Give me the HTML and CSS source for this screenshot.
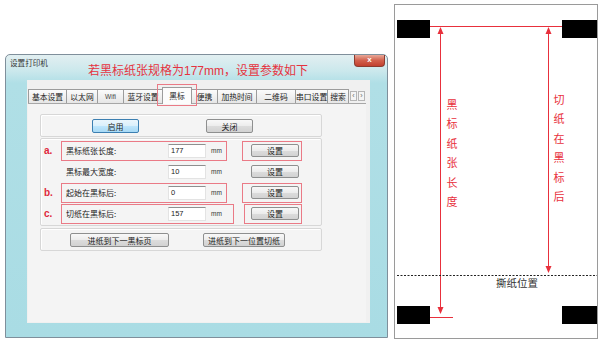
FILE: index.html
```html
<!DOCTYPE html>
<html lang="zh-CN">
<head>
  <meta charset="UTF-8" />
  <title>黑标设置</title>
  <link rel="stylesheet" href="styles.css">
</head>
<body>
  <div class="page">
    <div class="window">
      <div class="titlebar">
        <span class="title">设置打印机</span>
        <span class="note">若黑标纸张规格为177mm，设置参数如下</span>
        <span class="close">x</span>
      </div>
      <div class="client">
        <div class="tabs">
          <span class="tab">基本设置</span>
          <span class="tab">以太网</span>
          <span class="tab latin">Wifi</span>
          <span class="tab">蓝牙设置</span>
          <span class="tab active">黑标<i class="ring"></i></span>
          <span class="tab">便携</span>
          <span class="tab">加热时间</span>
          <span class="tab">二维码</span>
          <span class="tab">串口设置</span>
          <span class="tab">搜索</span>
          <span class="scroll"><b>‹</b><b>›</b></span>
        </div>
        <div class="panel">
          <div class="group g-switch">
            <button class="btn btn-focus">启用</button>
            <button class="btn btn-off">关闭</button>
          </div>
          <div class="group g-rows">
            <div class="row">
              <span class="tag">a.</span>
              <div class="field hl">
                <span class="label">黑标纸张长度:</span>
                <span class="input">177</span>
                <span class="unit">mm</span>
              </div>
              <div class="act hl"><button class="btn btn-set">设置</button></div>
            </div>
            <div class="row">
              <span class="tag"></span>
              <div class="field">
                <span class="label">黑标最大宽度:</span>
                <span class="input">10</span>
                <span class="unit">mm</span>
              </div>
              <div class="act"><button class="btn btn-set">设置</button></div>
            </div>
            <div class="row">
              <span class="tag">b.</span>
              <div class="field hl">
                <span class="label">起始在黑标后:</span>
                <span class="input">0</span>
                <span class="unit">mm</span>
              </div>
              <div class="act hl"><button class="btn btn-set">设置</button></div>
            </div>
            <div class="row">
              <span class="tag">c.</span>
              <div class="field hl wide">
                <span class="label">切纸在黑标后:</span>
                <span class="input">157</span>
                <span class="unit">mm</span>
              </div>
              <div class="act hl narrow"><button class="btn btn-set">设置</button></div>
            </div>
          </div>
          <div class="group g-feed">
            <button class="btn btn-feed1">进纸到下一黑标页</button>
            <button class="btn btn-feed2">进纸到下一位置切纸</button>
          </div>
        </div>
      </div>
    </div>

    <div class="sheet">
      <svg class="diagram" width="202" height="333" viewBox="0 0 202 333">
        <rect x="2" y="15" width="33" height="18" fill="#000"/>
        <rect x="167" y="15" width="35" height="18" fill="#000"/>
        <rect x="2" y="301" width="33" height="18" fill="#000"/>
        <rect x="167" y="301" width="35" height="18" fill="#000"/>
        <g stroke="#e8303c" stroke-width="1" fill="none">
          <line x1="35" y1="21.5" x2="167" y2="21.5"/>
          <line x1="45.5" y1="24" x2="45.5" y2="306"/>
          <line x1="35" y1="312.5" x2="58" y2="312.5"/>
          <line x1="153.5" y1="24" x2="153.5" y2="266"/>
        </g>
        <g fill="#e8303c">
          <polygon points="45.5,22 42.5,29 48.5,29"/>
          <polygon points="45.5,309 42.5,302 48.5,302"/>
          <polygon points="153.5,22 150.5,29 156.5,29"/>
          <polygon points="153.5,268 150.5,261 156.5,261"/>
        </g>
        <line x1="2" y1="270.5" x2="202" y2="270.5" stroke="#222" stroke-width="1" stroke-dasharray="2 1.5"/>
      </svg>
      <span class="vlabel v-left">黑标纸张长度</span>
      <span class="vlabel v-right">切纸在黑标后</span>
      <span class="tear">撕纸位置</span>
    </div>
  </div>
</body>
</html>
```

FILE: styles.css
```css
body {
  margin: 0;
  background: #fff;
  font-family: "Noto Sans CJK SC", "Liberation Sans", sans-serif;
  color: #222;
}
.page {
  display: flex;
  align-items: flex-start;
  width: 601px;
  height: 346px;
}

/* dialog window */
.window {
  margin: 54px 0 0 5px;
  width: 383px;
  height: 284px;
  box-sizing: border-box;
  border: 1px solid #7f8f9b;
  border-radius: 5px 5px 0 0;
  background: linear-gradient(#e2eff1 0, #cbe8ec 16px, #b0dfe6 28px, #a9dce4);
  display: flex;
  flex-direction: column;
}
.titlebar {
  height: 25px;
  display: flex;
  align-items: flex-start;
}
.title {
  margin: 3px 0 0 4px;
  font-size: 7.6px;
  line-height: 10px;
  color: #333;
}
.note {
  margin: 9px 0 0 40px;
  font-size: 12px;
  line-height: 14px;
  color: #e5333f;
  white-space: nowrap;
  font-family: "Liberation Sans", "Noto Sans CJK SC", sans-serif;
}
.close {
  margin-left: auto;
  margin-right: 2px;
  width: 31px;
  height: 12px;
  box-sizing: border-box;
  border: 1px solid #8c3b2f;
  border-top: none;
  border-radius: 0 0 4px 4px;
  background: linear-gradient(#e8a898, #d2604c 50%, #c2402e);
  color: #fff;
  font: bold 8px/10px "Liberation Sans", sans-serif;
  text-align: center;
}
.client {
  margin: 0 17px 0 21px;
  height: 243px;
  background: #f0f0f0;
  padding: 9px 0 0 1px;
  box-sizing: border-box;
}

/* tabs */
.tabs {
  display: flex;
  align-items: flex-end;
  height: 14px;
}
.tab {
  position: relative;
  height: 14px;
  box-sizing: border-box;
  border: 1px solid #9c9c9c;
  border-left: none;
  border-bottom: none;
  background: linear-gradient(#fbfbfb, #e6e6e6);
  font-size: 7.8px;
  line-height: 13px;
  text-align: center;
  white-space: nowrap;
  overflow: visible;
}
.tab:first-child { border-left: 1px solid #9c9c9c; }
.tab:nth-child(1) { width: 39px; }
.tab:nth-child(2) { width: 31px; }
.tab:nth-child(3) { width: 26px; }
.tab:nth-child(4) { width: 39px; }
.tab:nth-child(5) { width: 30px; }
.tab:nth-child(6) { width: 26px; }
.tab:nth-child(7) { width: 39px; }
.tab:nth-child(8) { width: 39px; }
.tab:nth-child(9) { width: 32px; }
.tab:nth-child(10) { width: 21px; }
.tab.latin {
  font: 6.5px/13px "Liberation Sans", sans-serif;
  color: #444;
}
.tab.active {
  height: 17px;
  margin-bottom: -1px;
  background: #fcfcfc;
  border-left: 1px solid #9c9c9c;
  margin-left: -1px;
  line-height: 15px;
  z-index: 1;
}
.ring {
  position: absolute;
  left: -6px;
  top: -4px;
  right: -6px;
  bottom: -2px;
  border: 1px solid #ea7a86;
}
.scroll {
  display: flex;
  gap: 1px;
  margin-left: 1px;
  margin-bottom: 2px;
}
.scroll b {
  width: 7px;
  height: 10px;
  box-sizing: border-box;
  border: 1px solid #b5b5b5;
  background: #f4f4f4;
  font: normal 7px/8px "Liberation Sans", sans-serif;
  color: #666;
  text-align: center;
}

/* panel */
.panel {
  width: 338px;
  height: 219px;
  box-sizing: border-box;
  border-top: 1px solid #a7a7a7;
  background: #f4f4f4;
  padding: 10px 0 0 12px;
}
.group {
  width: 282px;
  box-sizing: border-box;
  border: 1px solid #d7d7d7;
  border-radius: 2px;
  box-shadow: inset 1px 1px 0 #fff;
}
.g-switch {
  height: 23px;
  display: flex;
  padding: 4px 0 0 51px;
  gap: 67px;
}
.g-rows {
  margin-top: 1px;
  height: 88px;
  padding: 1px 0 0 2px;
}
.g-feed {
  margin-top: 2px;
  height: 23px;
  display: flex;
  padding: 4px 0 0 29px;
  gap: 34px;
}

/* buttons */
.btn {
  height: 14px;
  padding: 0;
  box-sizing: border-box;
  border: 1px solid #8e8f8f;
  border-radius: 2px;
  background: linear-gradient(#f8f8f8, #ececec 50%, #dcdcdc 51%, #d2d2d2);
  font-family: "Noto Sans CJK SC", sans-serif;
  font-size: 8px;
  line-height: 11px;
  color: #222;
}
.btn-focus {
  width: 47px;
  border-color: #3c7fb1;
  background: linear-gradient(#eaf6fd, #d9f0fc 50%, #bee6fd 51%, #a7d9f5);
}
.btn-off { width: 47px; }
.btn-set { width: 48px; height: 13px; }
.btn-feed1 { width: 99px; }
.btn-feed2 { width: 82px; }

/* parameter rows */
.row {
  display: flex;
  align-items: center;
  height: 21px;
}
.tag {
  width: 17px;
  font: bold 10px/12px "Liberation Sans", sans-serif;
  color: #e0283c;
  padding-left: 1px;
}
.field, .act {
  height: 20px;
  box-sizing: border-box;
  border: 1px solid transparent;
  display: flex;
  align-items: center;
}
.hl { border-color: #ea7a86; }
.field {
  width: 166px;
  padding-left: 4px;
}
.field.wide { width: 173px; }
.label {
  width: 102px;
  font-size: 8px;
  color: #222;
}
.input {
  width: 38px;
  height: 14px;
  box-sizing: border-box;
  background: #fff;
  border: 1px solid #e3e3e3;
  border-top-color: #8f8f8f;
  padding-left: 2px;
  font: 7.5px/12px "Liberation Sans", sans-serif;
  color: #222;
}
.unit {
  margin-left: 5px;
  font: 6.5px "Liberation Sans", sans-serif;
  color: #333;
}
.act {
  margin-left: 15px;
  width: 60px;
  padding-left: 8px;
}
.act.narrow {
  margin-left: 10px;
  width: 58px;
  padding-left: 6px;
}

/* sheet diagram */
.sheet {
  position: relative;
  margin: 4px 0 0 6px;
  width: 204px;
  height: 335px;
  box-sizing: border-box;
  border: 1px solid #9a9a9a;
}
.diagram { display: block; }
.vlabel {
  position: absolute;
  writing-mode: vertical-rl;
  font-size: 11px;
  line-height: 11px;
  letter-spacing: 8.5px;
  color: #e8303c;
}
.v-left { left: 51px; top: 94px; }
.v-right { left: 158px; top: 89px; }
.tear {
  position: absolute;
  left: 101px;
  top: 271px;
  font-size: 10.5px;
  line-height: 14px;
  color: #333;
}
```
